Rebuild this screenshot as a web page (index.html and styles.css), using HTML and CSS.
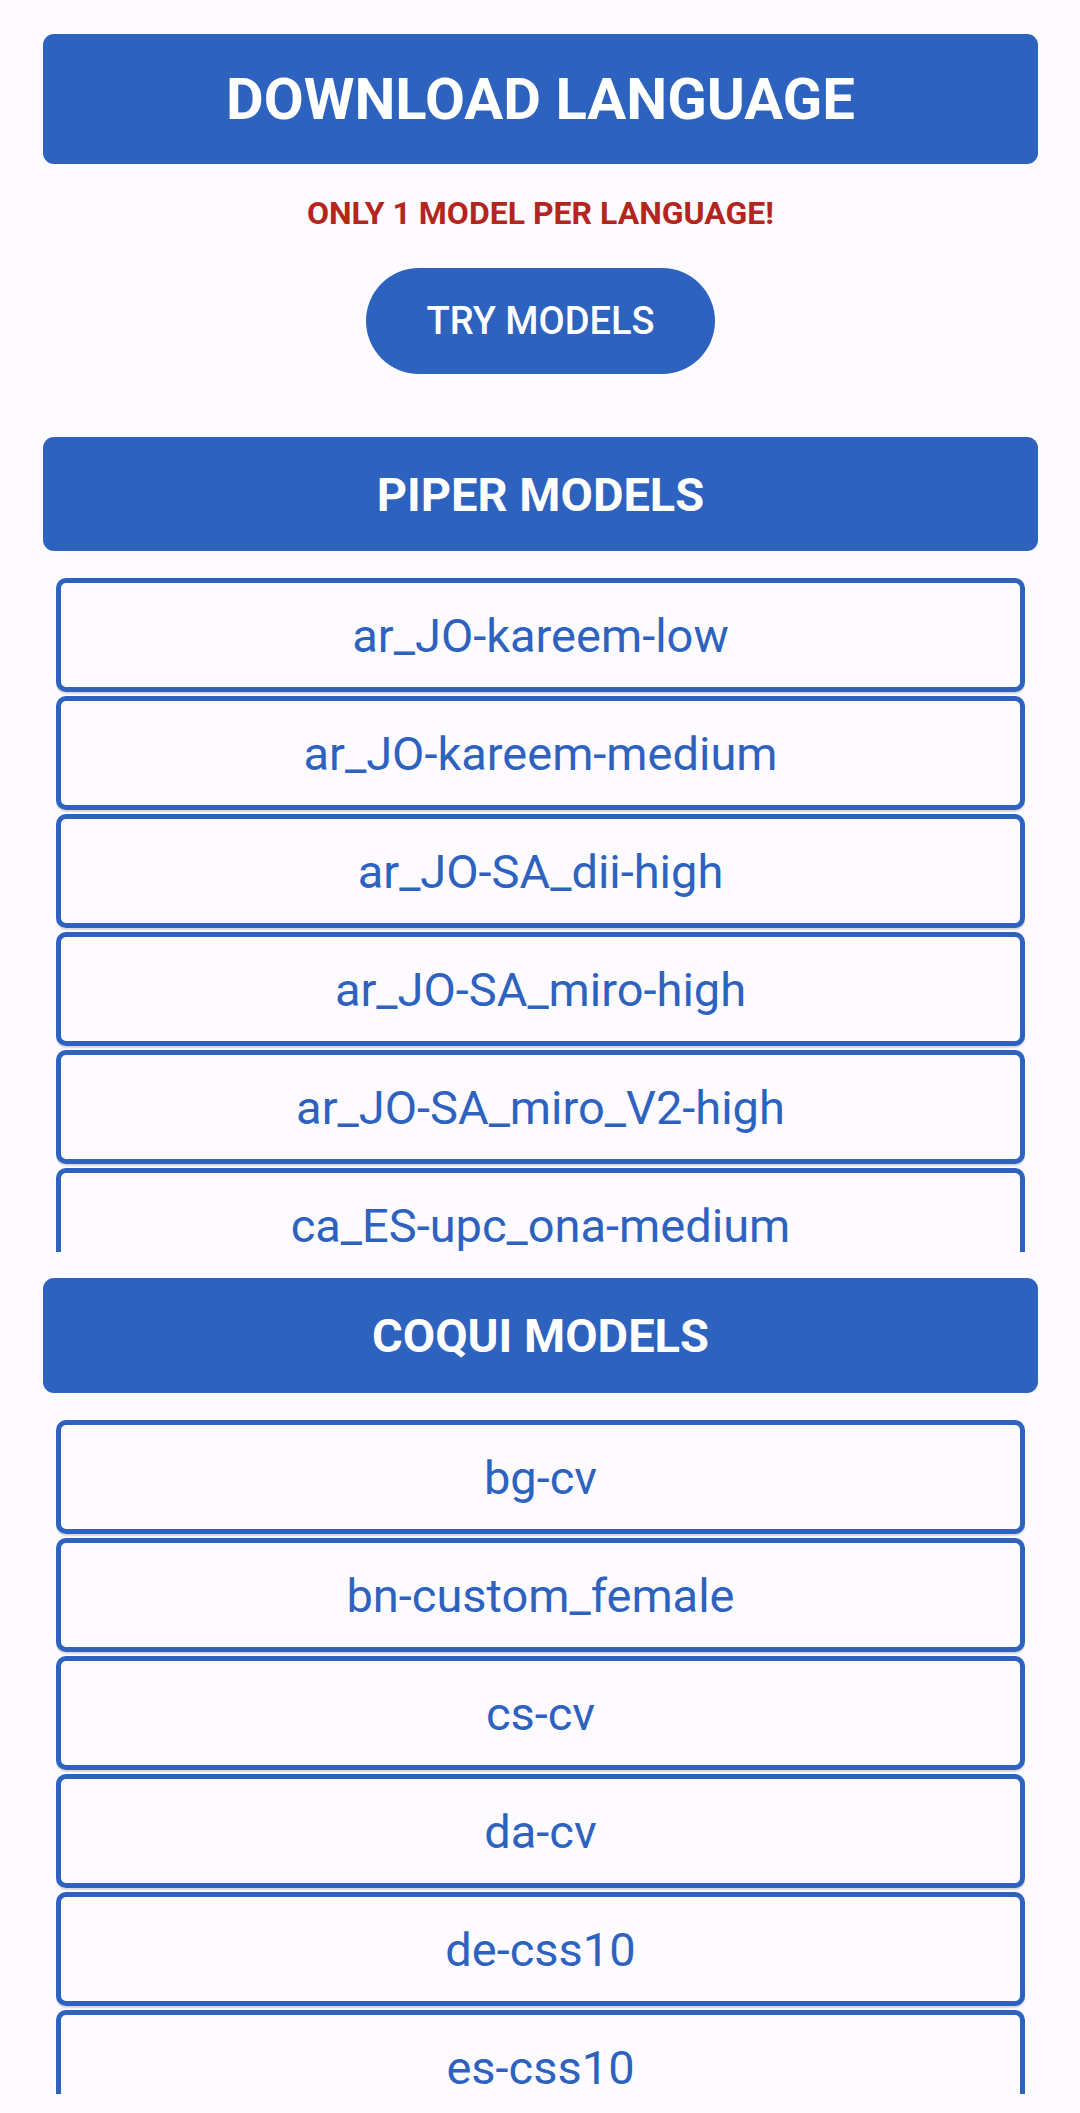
FILE: index.html
```html
<!DOCTYPE html>
<html>
<head>
<meta charset="utf-8">
<link rel="stylesheet" href="styles.css">
</head>
<body>
<div class="page">
  <div class="download">DOWNLOAD LANGUAGE</div>
  <div class="warning">ONLY 1 MODEL PER LANGUAGE!</div>
  <div class="try-row"><div class="try">TRY MODELS</div></div>

  <div class="section-header piper-header">PIPER MODELS</div>
  <div class="list">
    <div class="item">ar_JO-kareem-low</div>
    <div class="item">ar_JO-kareem-medium</div>
    <div class="item">ar_JO-SA_dii-high</div>
    <div class="item">ar_JO-SA_miro-high</div>
    <div class="item">ar_JO-SA_miro_V2-high</div>
    <div class="item">ca_ES-upc_ona-medium</div>
  </div>

  <div class="section-header coqui-header">COQUI MODELS</div>
  <div class="list">
    <div class="item">bg-cv</div>
    <div class="item">bn-custom_female</div>
    <div class="item">cs-cv</div>
    <div class="item">da-cv</div>
    <div class="item">de-css10</div>
    <div class="item">es-css10</div>
  </div>
</div>
</body>
</html>
```
FILE: styles.css
```css
html, body {
  margin: 0;
  padding: 0;
  background: #fdfbff;
}
body {
  font-family: Roboto, "Liberation Sans", sans-serif;
  height: 2113px;
  overflow: hidden;
}
.page {
  display: flex;
  flex-direction: column;
  padding: 34px 42px 0 43px;
}
.download {
  height: 130px;
  background: #2d62be;
  border-radius: 11px;
  color: #fff;
  font-weight: 700;
  font-size: 58px;
  display: flex;
  align-items: center;
  justify-content: center;
}
.warning {
  margin-top: 29px;
  height: 40px;
  line-height: 40px;
  text-align: center;
  color: #b3261e;
  font-weight: 700;
  font-size: 32px;
}
.try-row {
  margin-top: 35px;
  display: flex;
  justify-content: center;
}
.try {
  width: 349px;
  height: 106px;
  border-radius: 53px;
  background: #2d62be;
  color: #fff;
  font-weight: 500;
  font-size: 38px;
  display: flex;
  align-items: center;
  justify-content: center;
}
.section-header {
  height: 114px;
  background: #2d62be;
  border-radius: 11px;
  color: #fff;
  font-weight: 700;
  font-size: 47px;
  display: flex;
  align-items: center;
  justify-content: center;
}
.piper-header { margin-top: 63px; }
.coqui-header { margin-top: 26px; height: 115px; }
.list {
  margin: 27px 13px 0 13px;
  height: 674px;
  overflow: hidden;
}
.item {
  box-sizing: border-box;
  height: 114px;
  margin-bottom: 4px;
  border: 5px solid #2d62be;
  border-radius: 10px;
  background: #fdfbff;
  box-shadow: 0 2px 1px rgba(0, 0, 0, 0.14);
  color: #2d62be;
  font-size: 47px;
  display: flex;
  align-items: center;
  justify-content: center;
}
```
